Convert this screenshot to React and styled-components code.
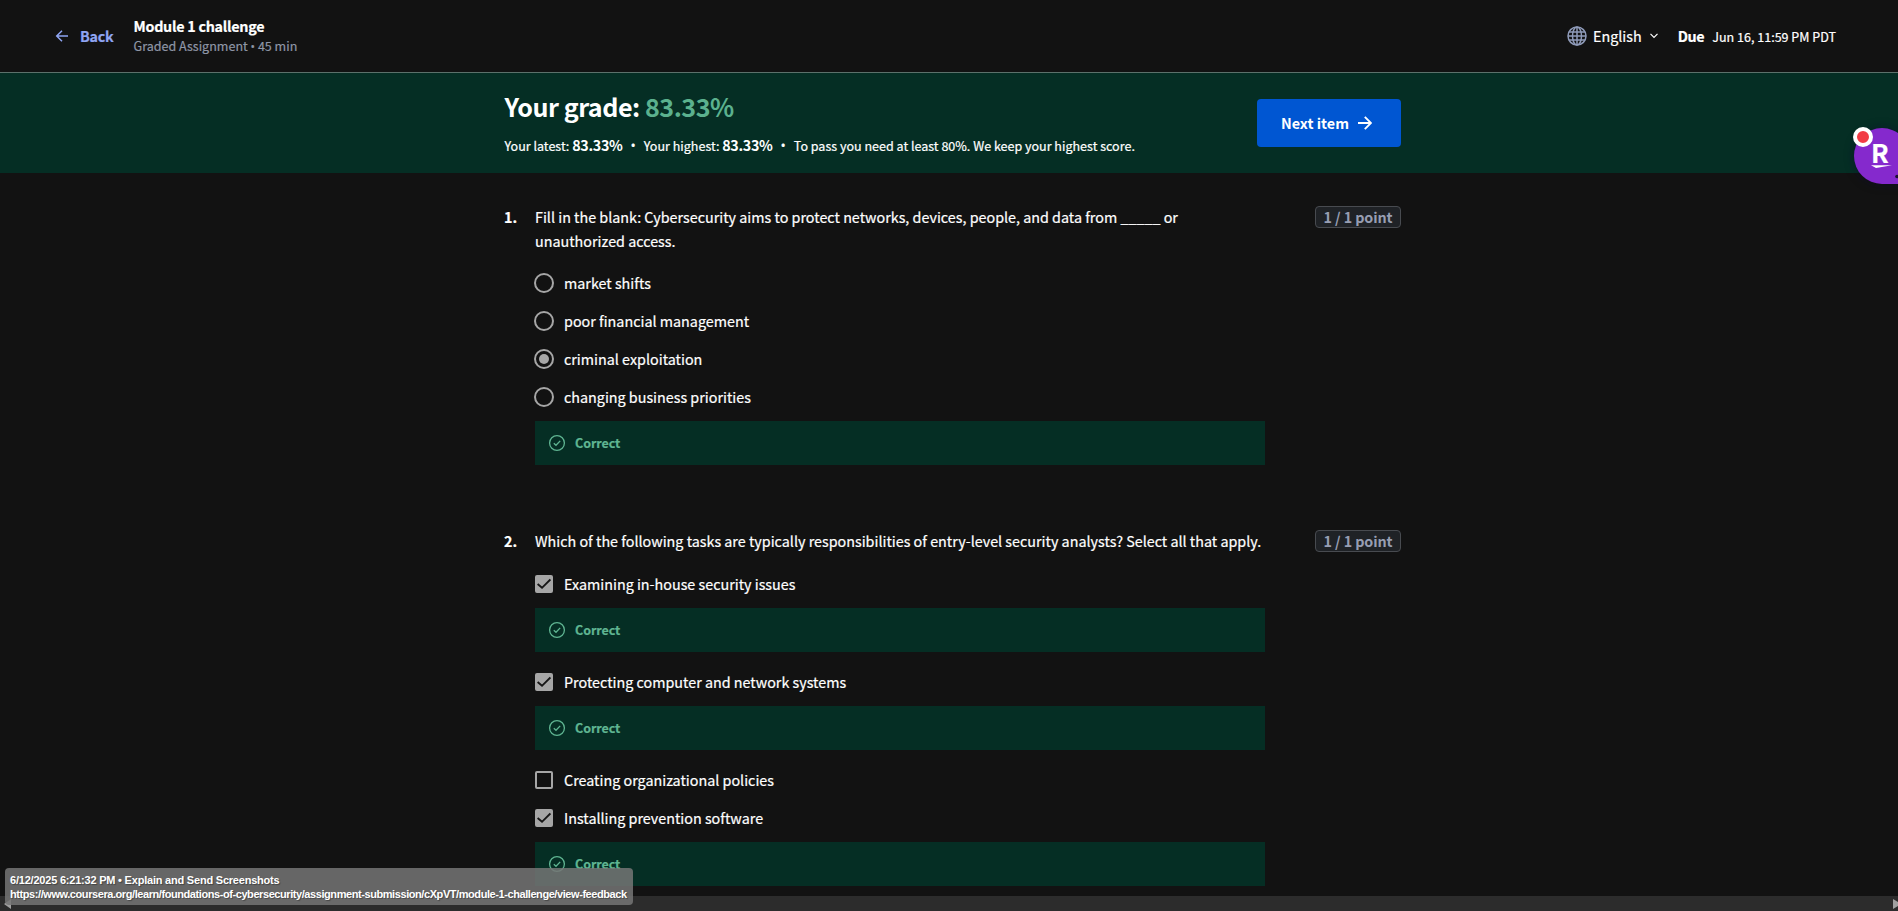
import React from "react";
import styled, { createGlobalStyle, css } from "styled-components";

const GlobalStyle = createGlobalStyle`
  * { box-sizing: border-box; }
  body {
    margin: 0;
    background: #121212;
    color: #fff;
    font-family: "Noto Sans CJK SC", "Noto Sans", sans-serif;
    font-size: 14.33px;
    -webkit-text-stroke: 0.2px currentColor;
    overflow: hidden;
  }
`;

const Page = styled.div`
  position: relative;
  display: flex;
  flex-direction: column;
  width: 100%;
  height: 911px;
  overflow: hidden;
`;

const Header = styled.header`
  display: flex;
  align-items: center;
  flex: none;
  height: 73px;
  padding: 0 62px 0 54px;
  border-bottom: 1px solid #5c716b;
`;

const BackLink = styled.a`
  display: flex;
  align-items: center;
  gap: 10px;
  width: 79.5px;
  color: #8fa5f2;
  font-weight: 700;
  letter-spacing: -0.3px;
  line-height: 22px;
  padding-bottom: 1px;
`;

const TitleBlock = styled.div`
  display: flex;
  flex-direction: column;
  flex: 1;
`;

const Title = styled.div`
  font-weight: 700;
  line-height: 20px;
  letter-spacing: -0.27px;
`;

const Subtitle = styled.div`
  font-size: 12.54px;
  line-height: 20px;
  color: #8f96a6;
`;

const Bullet = styled.span`
  font-family: "Open Sans", sans-serif;
  font-size: 12px;
  line-height: 1;
`;

const Language = styled.div`
  display: flex;
  align-items: center;
  line-height: 24px;
  svg:first-child { margin-right: 5.5px; }
  svg:last-child { margin-left: 8.5px; }
`;

const Due = styled.div`
  display: flex;
  align-items: baseline;
  gap: 8px;
  margin-left: 19.5px;
  line-height: 24px;
  font-size: 12.54px;
  b { font-size: 14.33px; letter-spacing: -0.35px; }
`;

const Banner = styled.section`
  display: flex;
  justify-content: center;
  flex: none;
  height: 100px;
  padding-left: 7px;
  background: #052e24;
`;

const Column = styled.div`
  width: 897px;
`;

const BannerRow = styled(Column)`
  display: flex;
  justify-content: space-between;
`;

const Grade = styled.h1`
  margin: 17px 0 0;
  font-size: 25.1px;
  line-height: 32px;
  font-weight: 700;
  letter-spacing: -0.46px;
  padding-left: 0.5px;
  -webkit-text-stroke: 0;
  span { color: #5bb18e; }
`;

const GradeNote = styled.p`
  display: flex;
  align-items: baseline;
  margin: 13px 0 0;
  padding-left: 0.5px;
  font-size: 12.54px;
  line-height: 20px;
  white-space: pre;
  b { font-size: 14.33px; letter-spacing: -0.31px; -webkit-text-stroke: 0; }
`;

const NoteBullet = styled(Bullet)`
  width: 21.2px;
  text-align: center;
  font-size: 14px;
`;

const NextButton = styled.button`
  display: flex;
  align-items: center;
  gap: 9px;
  width: 144px;
  height: 48px;
  margin: 26px 0 0;
  padding: 0 0 2px 24px;
  border: 0;
  border-radius: 4px;
  background: #0056d2;
  color: #fff;
  font: inherit;
  font-weight: 700;
  -webkit-text-stroke: 0;
  svg { position: relative; top: 1px; }
`;

const Main = styled.main`
  display: flex;
  flex-direction: column;
  align-items: center;
  flex: none;
  height: 723px;
  padding: 32px 0 0 7px;
  overflow: hidden;
`;

const Question = styled(Column)`
  display: grid;
  grid-template-columns: 31px 730px 1fr;
  flex: none;
  margin-bottom: 53px;
`;

const Number = styled.div`
  line-height: 24px;
  font-weight: 700;
`;

const Prompt = styled.p`
  margin: 0 0 ${(p) => p.$gap}px;
  line-height: 24px;
  white-space: nowrap;
`;

const Badge = styled.div`
  justify-self: end;
  width: 86px;
  height: 22px;
  margin-top: 1px;
  border: 1px solid #484b50;
  border-radius: 4px;
  background: #1f2226;
  color: #979eb2;
  font-weight: 700;
  line-height: 20px;
  text-align: center;
  letter-spacing: -0.1px;
  -webkit-text-stroke: 0;
`;

const Option = styled.div`
  display: flex;
  align-items: center;
  height: 38px;
`;

const OptionText = styled.span`
  line-height: 24px;
`;

const Radio = styled.span`
  display: grid;
  place-items: center;
  width: 20px;
  height: 20px;
  margin: 0 10px 0 -1px;
  border: 2px solid #a6a6a6;
  border-radius: 50%;
  ${(p) => p.$checked && css`
    &::after {
      content: "";
      width: 10px;
      height: 10px;
      border-radius: 50%;
      background: #a6a6a6;
    }
  `}
`;

const Checkbox = styled.span`
  display: grid;
  place-items: center;
  width: 18px;
  height: 18px;
  margin-right: 11px;
  border: 2px solid #a6a6a6;
  border-radius: 2px;
  background: ${(p) => (p.$checked ? "#a6a6a6" : "transparent")};
`;

const Feedback = styled.div`
  display: flex;
  align-items: center;
  gap: 9px;
  height: 44px;
  margin: 5px 0 11px;
  padding-left: 13px;
  background: #052e24;
  color: #5fb592;
  font-size: 12.54px;
  font-weight: 700;
  letter-spacing: -0.08px;
  span { padding-bottom: 2px; }
`;

const ScrollTrack = styled.div`
  display: flex;
  align-items: center;
  justify-content: space-between;
  height: 15px;
  padding-left: 4px;
  background: #2c2c2c;
`;

const Stamp = styled.div`
  position: absolute;
  left: 5px;
  top: 868px;
  width: 628px;
  height: 37px;
  padding: 5px;
  border-radius: 4px;
  background: rgba(118, 118, 118, 0.85);
  font: bold 11px/14px "Liberation Sans", sans-serif;
  white-space: nowrap;
  text-shadow: 1px 1px 1px rgba(0, 0, 0, 0.35);
  -webkit-text-stroke: 0;
`;

const StampLine = styled.div`
  letter-spacing: ${(p) => p.$tracking}px;
`;

const Widget = styled.div`
  position: absolute;
  left: 1854px;
  top: 128px;
  width: 56px;
  height: 56px;
  border-radius: 28px 28px 0 28px;
  background: #8529cd;
  box-shadow: 0 0 10px rgba(10, 10, 50, 0.5);
`;

const WidgetLetter = styled.span`
  position: absolute;
  left: 17px;
  top: 9px;
  font-size: 26px;
  line-height: 30px;
  font-weight: 700;
`;

const WidgetArt = styled.svg`
  position: absolute;
  left: 0;
  top: 0;
`;

const WidgetDot = styled.span`
  position: absolute;
  left: -1px;
  top: -1px;
  width: 20px;
  height: 20px;
  border: 4px solid #fff;
  border-radius: 50%;
  background: #f23c44;
`;

const ArrowLeft = () => (
  <svg width="16" height="14" viewBox="0 0 16 14" fill="none" stroke="currentColor" strokeWidth="1.5">
    <path d="M14 7H3M8 1.7L2.7 7L8 12.3" />
  </svg>
);

const ArrowRight = () => (
  <svg width="14" height="14" viewBox="0 0 14 14" fill="none" stroke="currentColor" strokeWidth="1.9">
    <path d="M0 7H13M6.8 0.8L13 7L6.8 13.2" />
  </svg>
);

const Globe = () => (
  <svg width="20" height="20" viewBox="0 0 20 20" fill="none" stroke="#8e9ab8" strokeWidth="1.5">
    <circle cx="10" cy="10" r="9" />
    <ellipse cx="10" cy="10" rx="4.5" ry="9" />
    <path d="M10 1V19M1 10H19M2.2 6H17.8M2.2 14H17.8" />
  </svg>
);

const Chevron = () => (
  <svg width="8" height="6" viewBox="0 0 8 6" fill="none" stroke="#fff" strokeWidth="1.2">
    <path d="M0.5 0.8L4 4.3L7.5 0.8" />
  </svg>
);

const CheckCircle = () => (
  <svg width="18" height="18" viewBox="0 0 18 18" fill="none" stroke="currentColor" strokeWidth="1.3">
    <circle cx="9" cy="9" r="7.4" />
    <path d="M5.8 9.2L8 11.3L12.2 6.9" />
  </svg>
);

const Tick = () => (
  <svg width="14" height="14" viewBox="0 0 14 14" fill="none" stroke="#161616" strokeWidth="1.9">
    <path d="M0.6 7L5 10.8L13.4 2.4" />
  </svg>
);

const Correct = () => (
  <Feedback>
    <CheckCircle />
    <span>Correct</span>
  </Feedback>
);

const radioOptions = [
  { text: "market shifts" },
  { text: "poor financial management" },
  { text: "criminal exploitation", checked: true },
  { text: "changing business priorities" },
];

const checkOptions = [
  { text: "Examining in-house security issues", checked: true },
  { text: "Protecting computer and network systems", checked: true },
  { text: "Creating organizational policies" },
  { text: "Installing prevention software", checked: true },
];

export default function App() {
  return (
    <Page>
      <GlobalStyle />
      <Header>
        <BackLink><ArrowLeft />Back</BackLink>
        <TitleBlock>
          <Title>Module 1 challenge</Title>
          <Subtitle>Graded Assignment <Bullet>•</Bullet> 45 min</Subtitle>
        </TitleBlock>
        <Language><Globe />English<Chevron /></Language>
        <Due><b>Due</b><span>Jun 16, 11:59 PM PDT</span></Due>
      </Header>
      <Banner>
        <BannerRow>
          <div>
            <Grade>Your grade: <span>83.33%</span></Grade>
            <GradeNote>
              <span>Your latest: <b>83.33%</b></span><NoteBullet>•</NoteBullet>
              <span>Your highest: <b>83.33%</b></span><NoteBullet>•</NoteBullet>
              <span>To pass you need at least 80%. We keep your highest score.</span>
            </GradeNote>
          </div>
          <NextButton>Next item<ArrowRight /></NextButton>
        </BannerRow>
      </Banner>
      <Main>
        <Question>
          <Number>1.</Number>
          <div>
            <Prompt $gap={11}>
              Fill in the blank: Cybersecurity aims to protect networks, devices, people, and data from _____ or
              <br />unauthorized access.
            </Prompt>
            {radioOptions.map((o) => (
              <Option key={o.text}>
                <Radio $checked={o.checked} />
                <OptionText>{o.text}</OptionText>
              </Option>
            ))}
            <Correct />
          </div>
          <Badge>1 / 1 point</Badge>
        </Question>
        <Question>
          <Number>2.</Number>
          <div>
            <Prompt $gap={12}>Which of the following tasks are typically responsibilities of entry-level security analysts? Select all that apply.</Prompt>
            {checkOptions.map((o) => (
              <React.Fragment key={o.text}>
                <Option>
                  <Checkbox $checked={o.checked}>{o.checked && <Tick />}</Checkbox>
                  <OptionText>{o.text}</OptionText>
                </Option>
                {o.checked && <Correct />}
              </React.Fragment>
            ))}
          </div>
          <Badge>1 / 1 point</Badge>
        </Question>
      </Main>
      <ScrollTrack>
        <svg width="8" height="10" viewBox="0 0 8 10" fill="#a0a0a0"><path d="M7 0V10L0 5Z" /></svg>
        <svg width="5" height="10" viewBox="0 0 5 10" fill="#a0a0a0"><path d="M0 0L5 3V7L0 10Z" /></svg>
      </ScrollTrack>
      <Stamp>
        <StampLine $tracking={-0.21}>6/12/2025 6:21:32 PM • Explain and Send Screenshots</StampLine>
        <StampLine $tracking={-0.425}>https://www.coursera.org/learn/foundations-of-cybersecurity/assignment-submission/cXpVT/module-1-challenge/view-feedback</StampLine>
      </Stamp>
      <Widget>
        <WidgetLetter>R</WidgetLetter>
        <WidgetArt width="44" height="56" viewBox="0 0 44 56">
          <path d="M17 37.3H38L22 40Z" fill="#fff" />
          <circle cx="43" cy="48.5" r="1.8" fill="#1c1030" />
        </WidgetArt>
        <WidgetDot />
      </Widget>
    </Page>
  );
}
